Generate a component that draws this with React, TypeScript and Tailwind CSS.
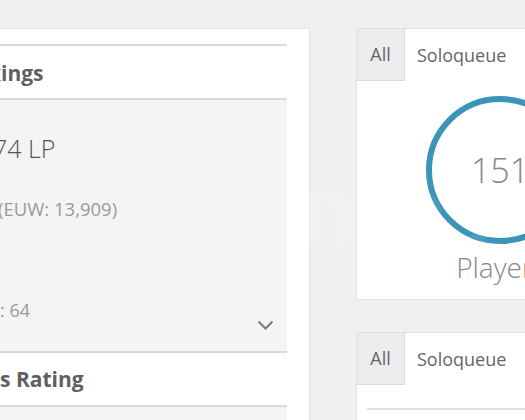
import React from "react";

function Clipped({ hidden, shown, className = "" }: { hidden: string; shown: string; className?: string }) {
  // The prefix sits left of the column edge and is cut off by the column's overflow.
  return (
    <div className={`flex whitespace-nowrap ${className}`}>
      <span className="w-[200px] -ml-[200px] shrink-0 text-right">{hidden}</span>
      <span>{shown}</span>
    </div>
  );
}

function Tabs() {
  return (
    <div className="flex h-[52px]">
      <div className="w-[48px] h-[52px] bg-[#ececec] border-r border-b border-[#dadada] flex items-center justify-center text-[18px] text-[#666]">
        All
      </div>
      <div className="px-[12px] h-[52px] flex items-center text-[18px] text-[#666]">Soloqueue</div>
      <div className="px-[12px] h-[52px] flex items-center text-[18px] text-[#666]">Flex</div>
    </div>
  );
}

export default function App() {
  return (
    <div className="relative w-[525px] h-[420px] overflow-hidden bg-[#f0f0f0] font-['Open_Sans',sans-serif]">
      <div className="flex items-start pt-[28px] gap-[46px]">
        {/* left column: rankings card */}
        <div className="w-[310px] h-[400px] shrink-0 bg-white border-t border-r border-[#e3e3e3] pt-[15px] pr-[22px]">
          <div className="overflow-hidden h-full">
            <div className="h-[56px] border-t-2 border-b-2 border-[#d9d9d9] flex items-center pt-[3px]">
              <Clipped hidden="Solo Rank" shown="ings" className="text-[21px] font-bold text-[#606060] ml-[1px]" />
            </div>
            <div className="h-[253px] bg-[#f4f4f4] border-b-2 border-[#d9d9d9] pt-[33px]">
              <Clipped hidden="Platinum II " shown="74 LP" className="text-[25px] leading-[30px] font-light text-[#555] -ml-[7px]" />
              <Clipped
                hidden="Ladder Rank 1,482 "
                shown="(EUW: 13,909)"
                className="mt-[34px] text-[18.5px] leading-[24px] text-[#9a9a9a] -ml-[2px]"
              />
              <Clipped hidden="Wins" shown=": 64" className="mt-[77px] text-[18px] leading-[24px] text-[#9a9a9a]" />
              <div className="flex justify-end pr-[13px] -mt-[2px]">
                <svg width="17" height="11" viewBox="0 0 17 11" fill="none">
                  <path d="M1.5 1.5 L8.5 8.5 L15.5 1.5" stroke="#7a7a7a" strokeWidth="2" />
                </svg>
              </div>
            </div>
            <div className="h-[54px] border-b-2 border-[#d9d9d9] flex items-center pt-[1px]">
              <Clipped hidden="Summoner'" shown="s Rating" className="text-[21px] font-bold text-[#606060]" />
            </div>
            <div className="h-full bg-[#f4f4f4]" />
          </div>
        </div>

        {/* right column: player count cards */}
        <div className="w-[288px] shrink-0 flex flex-col gap-[32px]">
          <div className="h-[272px] bg-white border border-[#e0e0e0]">
            <Tabs />
            <div className="flex flex-col items-center pt-[14px]">
              <div className="relative w-[150px] h-[150px]">
                <svg width="150" height="150" viewBox="0 0 150 150" className="absolute inset-0">
                  <circle cx="75" cy="75" r="71" fill="none" stroke="#3b95b6" strokeWidth="6" />
                </svg>
                <div className="absolute inset-0 flex items-center justify-center text-[34px] font-light text-[#888]">
                  151
                </div>
              </div>
              <div className="mt-[4px] pl-[2px] text-[28px] font-light text-[#888] leading-[36px]">Players</div>
            </div>
          </div>
          <div className="h-[200px] bg-white border border-[#e0e0e0]">
            <Tabs />
            <div className="px-[10px] pt-[23px]">
              <div className="border-t-2 border-[#e0e0e0]" />
            </div>
          </div>
        </div>
      </div>

      {/* faint site watermark over the page */}
      <div className="pointer-events-none absolute left-[135px] top-[160px] text-[96px] font-bold text-white opacity-[0.07] whitespace-nowrap leading-none">
        [Games
      </div>
    </div>
  );
}
